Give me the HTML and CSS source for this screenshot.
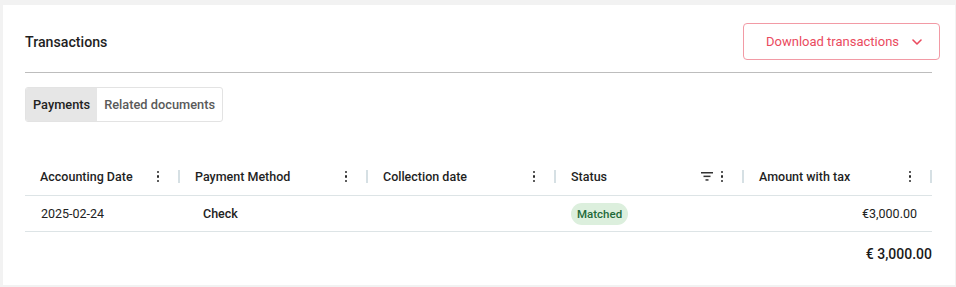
FILE: index.html
```html
<!DOCTYPE html>
<html lang="en">
<head>
<meta charset="utf-8">
<title>Transactions</title>
<link rel="stylesheet" href="styles.css">
</head>
<body>
<div class="card">
  <div class="card-head">
    <h2 class="title">Transactions</h2>
    <button class="download-btn">
      <span>Download transactions</span>
      <svg class="chev" width="10" height="6" viewBox="0 0 10 6"><path d="M1 1l4 4 4-4" fill="none" stroke="currentColor" stroke-width="1.6" stroke-linecap="round" stroke-linejoin="round"/></svg>
    </button>
  </div>
  <div class="divider"></div>
  <div class="tabs">
    <div class="tab active">Payments</div>
    <div class="tab">Related documents</div>
  </div>

  <div class="table">
    <div class="th"><span class="th-label">Accounting Date</span><span class="kebab"><i></i><i></i><i></i></span><span class="sep"></span></div>
    <div class="th"><span class="th-label">Payment Method</span><span class="kebab"><i></i><i></i><i></i></span><span class="sep"></span></div>
    <div class="th"><span class="th-label">Collection date</span><span class="kebab"><i></i><i></i><i></i></span><span class="sep"></span></div>
    <div class="th"><span class="th-label">Status</span>
      <svg class="filter" width="12" height="9" viewBox="0 0 12 9"><rect x="0" y="0" width="12" height="1.5" fill="#333"/><rect x="2.5" y="3.6" width="7" height="1.5" fill="#333"/><rect x="4.5" y="7.2" width="3" height="1.5" fill="#333"/></svg>
      <span class="kebab"><i></i><i></i><i></i></span><span class="sep"></span></div>
    <div class="th"><span class="th-label">Amount with tax</span><span class="kebab"><i></i><i></i><i></i></span><span class="sep"></span></div>

    <div class="td">2025-02-24</div>
    <div class="td method">Check</div>
    <div class="td"></div>
    <div class="td"><span class="chip">Matched</span></div>
    <div class="td amount">€3,000.00</div>
  </div>
  <div class="total">€ 3,000.00</div>
</div>
</body>
</html>
```

FILE: styles.css
```css
* { box-sizing: border-box; }
html, body { margin: 0; padding: 0; }
body {
  background: #f2f2f2;
  font-family: Roboto, "Noto Sans", sans-serif;
  color: #212121;
  width: 956px;
  height: 287px;
  overflow: hidden;
}
.card {
  background: #fff;
  margin: 5px 1px 0 3px;
  height: 280px;
  padding: 18px 23px 0 22px;
}
.card-head {
  display: flex;
  align-items: center;
  justify-content: space-between;
  height: 37px;
  margin-right: -8px;
}
.title {
  margin: 0;
  font-size: 14.2px;
  font-weight: 500;
  color: #1f1f1f;
}
.download-btn {
  display: flex;
  align-items: center;
  height: 37px;
  width: 197px;
  padding: 0 0 0 22px;
  background: #fff;
  border: 1px solid #f29aa5;
  border-radius: 4px;
  color: #ea4a5e;
  font-family: Roboto, sans-serif;
  font-size: 13px;
  font-weight: 400;
  cursor: pointer;
}
.chev { margin-left: 13px; color: #ea4a5e; }
.divider {
  height: 1px;
  background: #bdbdbd;
  margin-top: 12px;
}
.tabs {
  display: inline-flex;
  margin-top: 14px;
  height: 35px;
  border: 1px solid #e3e3e3;
  border-radius: 3px;
  overflow: hidden;
}
.tab {
  display: flex;
  align-items: center;
  padding: 0 7px 0 7px;
  font-size: 12.8px;
  font-weight: 500;
  color: #5a5a5a;
}
.tab.active {
  background: #e6e6e6;
  color: #222;
}
.table {
  display: grid;
  grid-template-columns: 155px 188px 188px 188px 188px;
  margin-top: 34px;
}
.th {
  display: flex;
  align-items: center;
  height: 40px;
  padding: 2px 0 0 15px;
  border-bottom: 1px solid #dde4e6;
  font-size: 12.5px;
  font-weight: 500;
  color: #1f1f1f;
}
.th-label { flex: 1; }
.kebab {
  display: flex;
  flex-direction: column;
  gap: 2px;
  width: 3px;
  margin-right: 18px;
}
.kebab i {
  display: block;
  width: 2px;
  height: 2.5px;
  background: #2a2a2a;
  border-radius: 1px;
}
.filter { margin-right: 8px; }
.sep {
  width: 2px;
  height: 13px;
  background: #d6e0e4;
}
.td {
  display: flex;
  align-items: center;
  height: 36px;
  padding-left: 16px;
  border-bottom: 1px solid #dde4e6;
  font-size: 12.5px;
  color: #222;
}
.td.method { padding-left: 23px; font-weight: 500; }
.td.amount { justify-content: flex-end; padding-right: 15px; }
.chip {
  display: inline-flex;
  align-items: center;
  height: 22px;
  padding: 0 6px;
  margin-left: -1px;
  border-radius: 11px;
  background: #dcefdd;
  color: #1f6a3a;
  font-size: 11.5px;
  font-weight: 500;
}
.total {
  text-align: right;
  margin-top: 14px;
  font-size: 14px;
  font-weight: 500;
  color: #1a1a1a;
}
```
